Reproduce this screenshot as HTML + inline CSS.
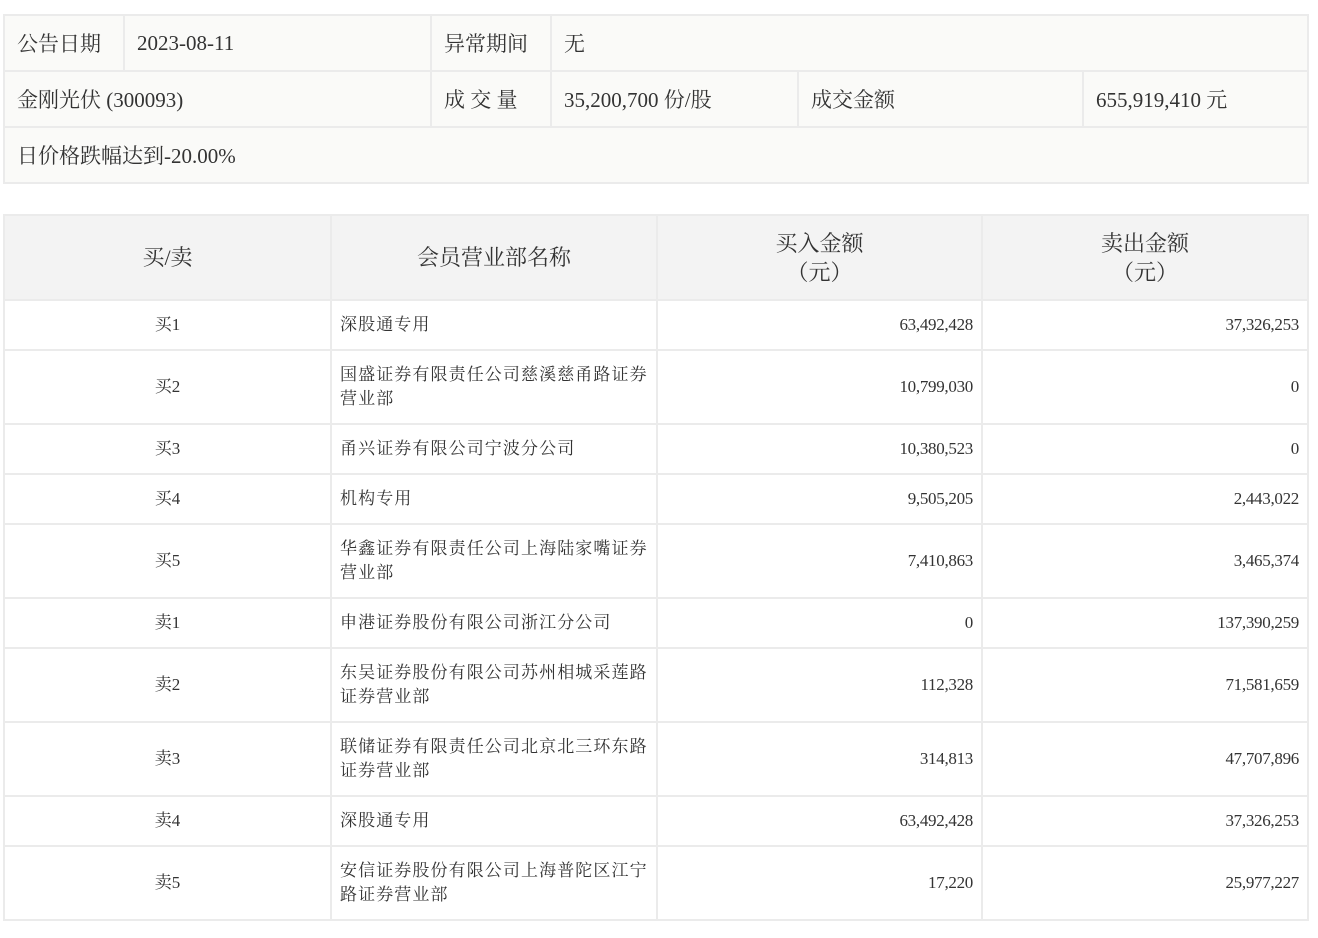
<!DOCTYPE html>
<html><head><meta charset="utf-8"><style>
body{margin:0;background:#fff;width:1318px;height:938px;position:relative;font-family:"Liberation Serif","Noto Serif CJK SC",serif;color:#333;}
table{position:absolute;left:3px;border-collapse:collapse;table-layout:fixed;}
td,th{border:2px solid #ebebeb;padding:0;font-weight:normal;}
#t1{top:14px;width:1304px;background:#fafaf8;font-size:21px;}
#t1 td{height:54px;padding-left:12px;}
#t2{top:214px;width:1304px;font-size:17px;}
#t2 th{background:#f3f3f3;height:83px;font-size:22px;line-height:29px;}
#t2 td{padding:0 8px;line-height:24px;}
#t2 td.c{text-align:center}
#t2 td.r{text-align:right;letter-spacing:-0.3px}
#t2 td.n{letter-spacing:1.1px;white-space:nowrap}
.h1 td{height:48px}.h2 td{height:72px}
</style></head><body>
<table id="t1">
<colgroup><col style="width:120px"><col style="width:307px"><col style="width:120px"><col style="width:247px"><col style="width:285px"><col style="width:225px"></colgroup>
<tr><td>公告日期</td><td>2023-08-11</td><td>异常期间</td><td colspan="3">无</td></tr>
<tr><td colspan="2">金刚光伏 (300093)</td><td>成 交 量</td><td>35,200,700 份/股</td><td>成交金额</td><td>655,919,410 元</td></tr>
<tr><td colspan="6">日价格跌幅达到-20.00%</td></tr>
</table>
<table id="t2">
<colgroup><col style="width:327px"><col style="width:326px"><col style="width:325px"><col style="width:326px"></colgroup>
<tr><th>买/卖</th><th>会员营业部名称</th><th>买入金额<br>（元）</th><th>卖出金额<br>（元）</th></tr>
<tr class="h1"><td class="c">买1</td><td class="n">深股通专用</td><td class="r">63,492,428</td><td class="r">37,326,253</td></tr>
<tr class="h2"><td class="c">买2</td><td class="n">国盛证券有限责任公司慈溪慈甬路证券<br>营业部</td><td class="r">10,799,030</td><td class="r">0</td></tr>
<tr class="h1"><td class="c">买3</td><td class="n">甬兴证券有限公司宁波分公司</td><td class="r">10,380,523</td><td class="r">0</td></tr>
<tr class="h1"><td class="c">买4</td><td class="n">机构专用</td><td class="r">9,505,205</td><td class="r">2,443,022</td></tr>
<tr class="h2"><td class="c">买5</td><td class="n">华鑫证券有限责任公司上海陆家嘴证券<br>营业部</td><td class="r">7,410,863</td><td class="r">3,465,374</td></tr>
<tr class="h1"><td class="c">卖1</td><td class="n">申港证券股份有限公司浙江分公司</td><td class="r">0</td><td class="r">137,390,259</td></tr>
<tr class="h2"><td class="c">卖2</td><td class="n">东吴证券股份有限公司苏州相城采莲路<br>证券营业部</td><td class="r">112,328</td><td class="r">71,581,659</td></tr>
<tr class="h2"><td class="c">卖3</td><td class="n">联储证券有限责任公司北京北三环东路<br>证券营业部</td><td class="r">314,813</td><td class="r">47,707,896</td></tr>
<tr class="h1"><td class="c">卖4</td><td class="n">深股通专用</td><td class="r">63,492,428</td><td class="r">37,326,253</td></tr>
<tr class="h2"><td class="c">卖5</td><td class="n">安信证券股份有限公司上海普陀区江宁<br>路证券营业部</td><td class="r">17,220</td><td class="r">25,977,227</td></tr>
</table>
</body></html>
